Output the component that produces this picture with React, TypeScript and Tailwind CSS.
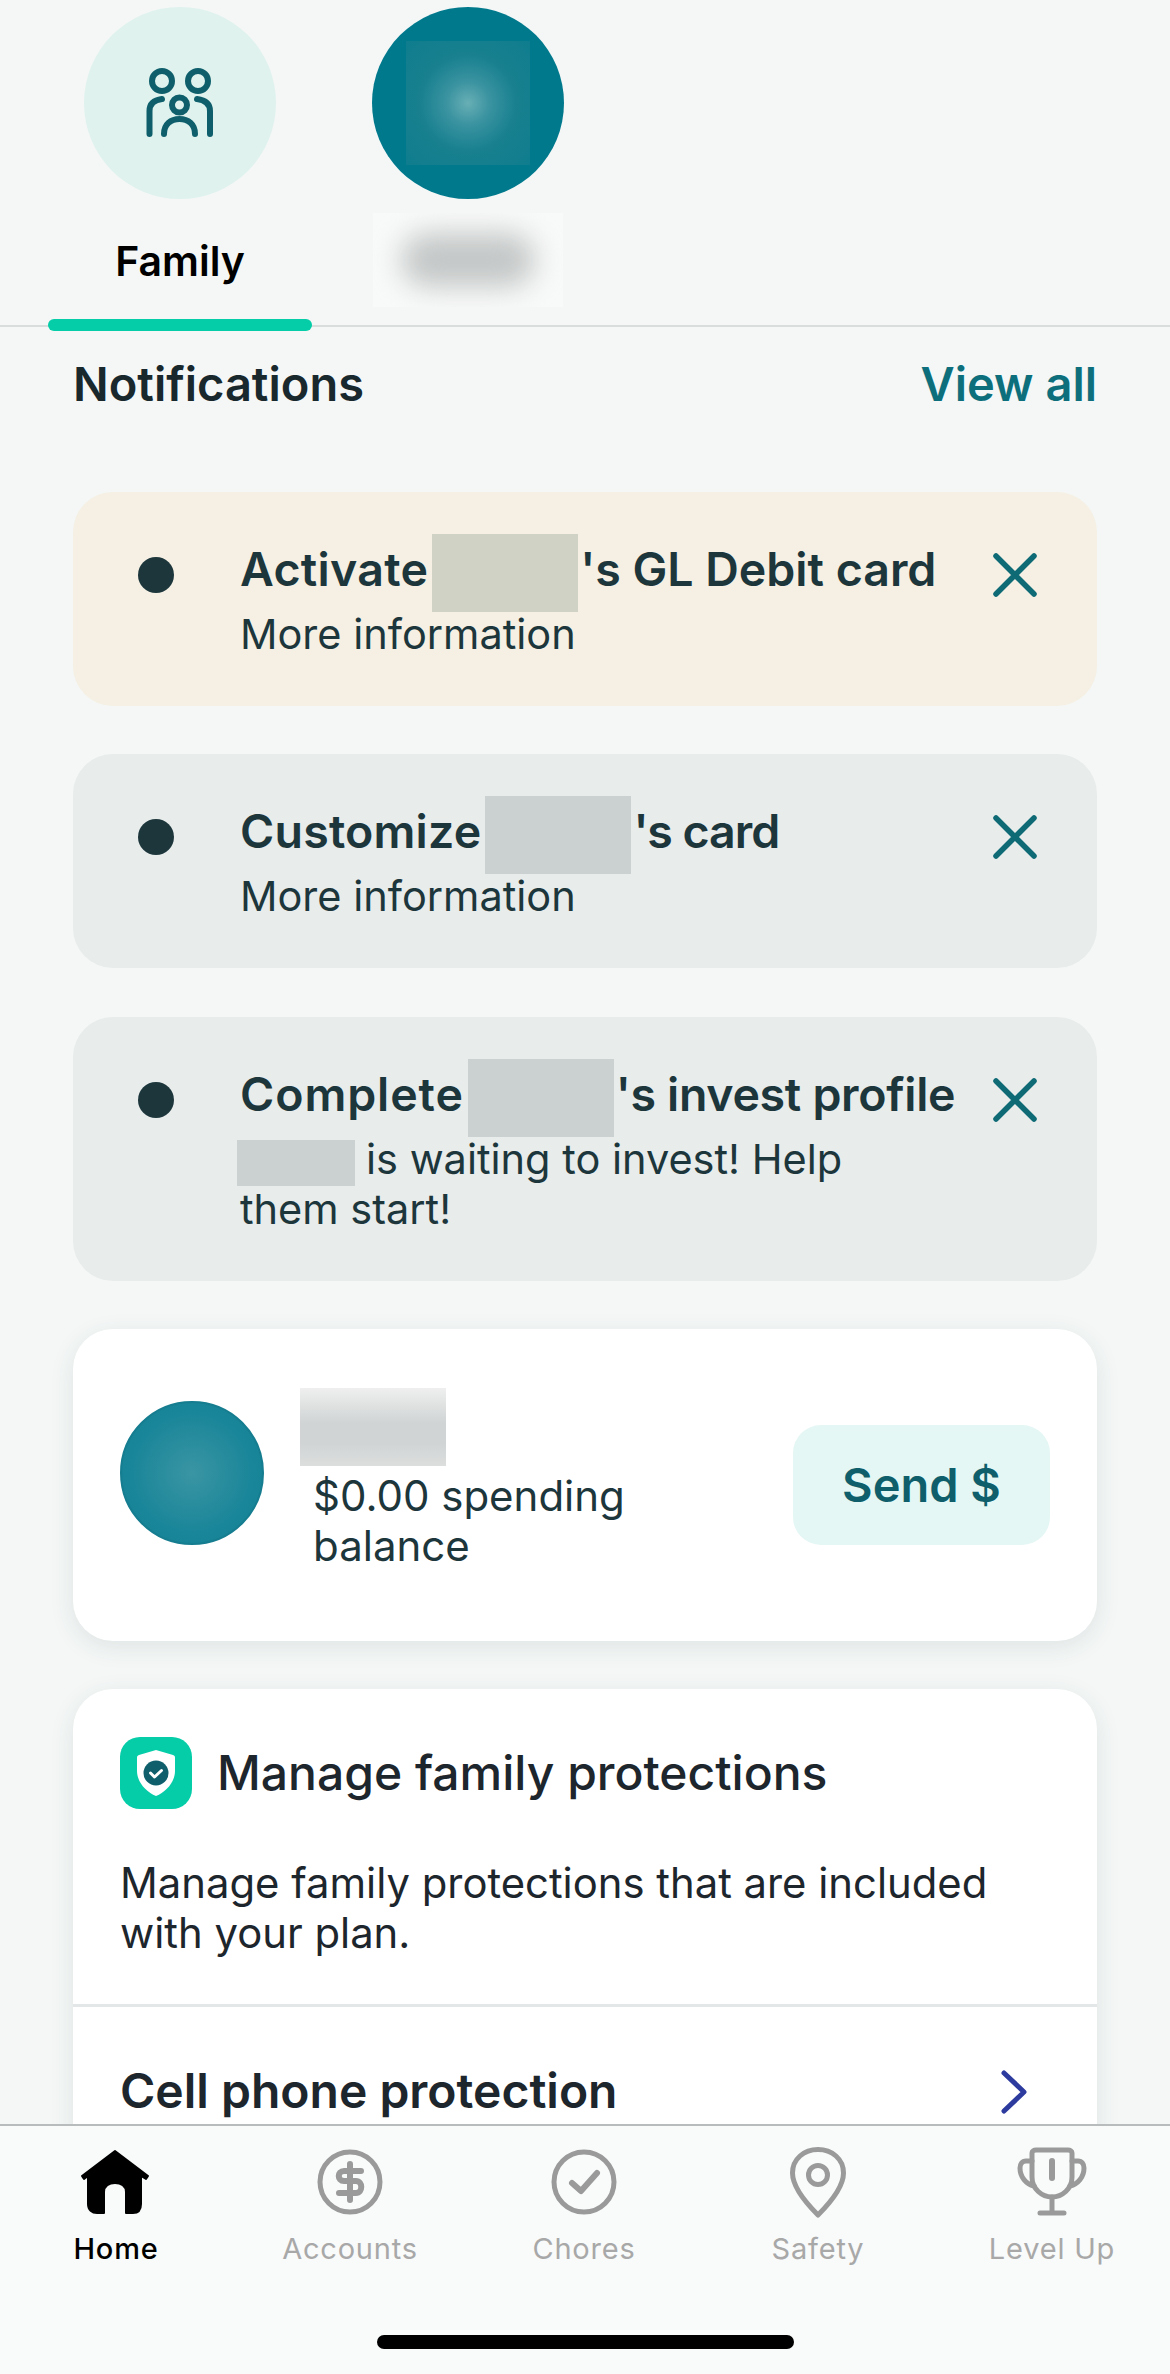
const F = "[font-family:Inter,'Liberation_Sans',sans-serif]";

function Redact({ w, bg }: { w: string; bg: string }) {
  return <span className={`inline-block h-[78px] -my-[20px] ml-[4px] mr-[2px] align-middle ${w} ${bg}`} />;
}

function Close() {
  return (
    <svg viewBox="0 0 44 44" className="w-[44px] h-[44px] shrink-0" fill="none" stroke="#0e6a75" strokeWidth="5.5" strokeLinecap="round">
      <path d="M3 3 L41 41 M41 3 L3 41" />
    </svg>
  );
}

function Card({ bg, title, sub }: { bg: string; title: React.ReactNode; sub: React.ReactNode }) {
  return (
    <div className={`flex rounded-[40px] pt-[49px] pb-[47px] pl-[65px] pr-[60px] ${bg}`}>
      <div className="w-[36px] h-[36px] mt-[16px] rounded-full bg-[#1c363c] shrink-0" />
      <div className="flex-1 ml-[66px] min-w-0">
        <div className="text-[46.5px] leading-[56px] font-semibold text-[#1c363c] whitespace-nowrap">{title}</div>
        <div className="mt-[12px] text-[41.5px] leading-[50px] text-[#1c363c] w-[640px]">{sub}</div>
      </div>
      <div className="mt-[12px]"><Close /></div>
    </div>
  );
}

export default function App() {
  return (
    <div className={`relative w-[1170px] h-[2374px] overflow-hidden bg-[#f4f7f6] ${F}`}>
      {/* tabs */}
      <div className="relative h-[327px] border-b-2 border-[#d9dedd] flex pl-[48px]">
        <div className="w-[264px] flex flex-col items-center pt-[7px] relative">
          <div className="w-[192px] h-[192px] rounded-full bg-[#dff2ee] flex items-center justify-center">
            <svg viewBox="0 0 72 72" className="w-[72px] h-[72px]" fill="none" stroke="#0e5f6b" strokeWidth="6" strokeLinecap="round">
              <circle cx="18" cy="14" r="10" />
              <circle cx="54" cy="14" r="10" />
              <circle cx="35.5" cy="38" r="7.5" />
              <path d="M18 32 C10 33 5.5 37 5.5 44 V67" />
              <path d="M53 32 C61 33 66 37 66 44 V67" />
              <path d="M20 67 C20 57 27 52 35.5 52 C44 52 51 57 51 67" />
            </svg>
          </div>
          <div className="mt-[38px] text-[41px] leading-[48px] font-semibold text-black">Family</div>
          <div className="absolute left-0 right-0 top-[319px] h-[12px] rounded-full bg-[#04cda8]" />
        </div>
        <div className="ml-[60px] w-[192px] flex flex-col items-center pt-[7px]">
          <div className="w-[192px] h-[192px] rounded-full bg-[#01798d] flex items-center justify-center">
            <div className="w-[124px] h-[124px] bg-[radial-gradient(circle,#68afb5_0%,#3a93a0_25%,#18808f_55%,#0f7d8e_100%)]" />
          </div>
          <div className="mt-[14px] w-[190px] h-[94px] bg-[#f8faf9] flex items-center justify-center overflow-hidden">
            <div className="w-[134px] h-[54px] rounded-full bg-[#c4c7c7] blur-[14px]" />
          </div>
        </div>
      </div>

      {/* body */}
      <div className="px-[73px]">
        <div className="flex justify-between items-center mt-[29px] h-[56px]">
          <span className="text-[47px] font-semibold text-[#18282d]">Notifications</span>
          <span className="text-[47px] font-semibold text-[#0e6f7c]">View all</span>
        </div>

        <div className="mt-[80px] flex flex-col gap-[48px]">
          <Card
            bg="bg-[#f5f0e3]"
            title={<><span className="tracking-[0.3px]">Activate</span><Redact w="w-[146px]" bg="bg-[#d1d2c6]" />'s GL Debit card</>}
            sub="More information"
          />
          <Card
            bg="bg-[#e8eceb] mb-[1px]"
            title={<><span className="tracking-[0.2px]">Customize</span><Redact w="w-[146px]" bg="bg-[#cbd0d0]" /><span className="tracking-[-1px]">'s card</span></>}
            sub="More information"
          />
          <Card
            bg="bg-[#e8eceb]"
            title={<><span className="tracking-[0.9px]">Complete</span><Redact w="w-[146px]" bg="bg-[#cbd0d0]" /><span className="tracking-[-0.3px]">'s invest profile</span></>}
            sub={<><span className="inline-block w-[118px] h-[46px] -my-[4px] -ml-[3px] mr-[11px] align-middle bg-[#cbd0d0]" />is waiting to invest! Help them start!</>}
          />

          {/* member card */}
          <div className="flex items-start rounded-[40px] bg-white h-[312px] pl-[47px] pr-[47px] shadow-[0_6px_24px_rgba(40,70,75,0.10)]">
            <div className="w-[144px] h-[144px] mt-[72px] rounded-full bg-[radial-gradient(circle,#3a95a3_0%,#1a8699_60%,#117f92_100%)] border-2 border-[#157d8f] shrink-0" />
            <div className="ml-[36px] flex-1 pt-[59px]">
              <div className="w-[146px] h-[78px] bg-[linear-gradient(#efefef,#d0d4d4_45%,#d0d4d4_70%,#dcdede)]" />
              <div className="ml-[13px] mt-[5px] w-[340px] text-[42px] leading-[50px] text-[#1c363c]">$0.00 spending balance</div>
            </div>
            <div className="w-[257px] h-[120px] mt-[96px] rounded-[28px] bg-[#e4f7f4] flex items-center justify-center text-[47px] font-semibold text-[#0e5f6b] shrink-0">Send $</div>
          </div>

          {/* protections */}
          <div className="rounded-t-[40px] bg-white shadow-[0_6px_24px_rgba(40,70,75,0.10)] h-[700px]">
            <div className="pt-[48px] px-[47px]">
              <div className="flex items-center">
                <div className="w-[72px] h-[72px] rounded-[20px] bg-[#04cda8] flex items-center justify-center">
                  <svg viewBox="0 0 40 48" className="w-[40px] h-[48px]">
                    <path d="M20 1 L37 6 C38.5 6.5 39 7 39 9 V22 C39 33 30 43 20 47 C10 43 1 33 1 22 V9 C1 7 1.5 6.5 3 6 Z" fill="#fff" />
                    <circle cx="20" cy="24" r="12.5" fill="#0e5f6b" />
                    <path d="M14.5 24 L18.5 28 L25.5 21.5" fill="none" stroke="#fff" strokeWidth="3" strokeLinecap="round" strokeLinejoin="round" />
                  </svg>
                </div>
                <span className="ml-[25px] text-[48px] font-medium text-[#1d262c]">Manage family protections</span>
              </div>
              <div className="mt-[49px] text-[41.8px] leading-[50px] text-[#1d262c] w-[900px]">Manage family protections that are included with your plan.</div>
            </div>
            <div className="mt-[46px] border-t-[3px] border-[#e4e7e7] pl-[47px] pr-[70px] pt-[56px] flex items-start justify-between">
              <span className="text-[48px] leading-[56px] font-semibold text-[#1d262c]">Cell phone protection</span>
              <svg viewBox="0 0 26 44" className="w-[26px] h-[44px] mt-[7px]" fill="none" stroke="#2d3a9e" strokeWidth="5" strokeLinecap="round" strokeLinejoin="round">
                <path d="M3 3 L23 22 L3 41" />
              </svg>
            </div>
          </div>
        </div>
      </div>

      {/* bottom bar */}
      <div className="absolute left-0 right-0 bottom-0 h-[250px] bg-[#f9fafa] border-t-2 border-[#b9bcbc]">
        <div className="flex -ml-[1px]">
          {[
            { label: "Home", active: true, icon: (
              <svg viewBox="0 0 72 72" className="w-[72px] h-[72px]" fill="#000">
                <path d="M35 5 L68 30 L66 33 L61 30 V58 C61 64 58 67 53 67 H46 V46 C46 40 41 37 35 37 C29 37 24 40 24 46 V67 H17 C12 67 8 64 8 58 V30 L4 33 L2 30 Z" stroke="#000" strokeLinejoin="round" strokeWidth="2"/>
              </svg>
            )},
            { label: "Accounts", icon: (
              <svg viewBox="0 0 72 72" className="w-[72px] h-[72px]" fill="none" stroke="#9a9a9a" strokeWidth="5" strokeLinecap="round">
                <circle cx="36" cy="36" r="30" />
                <path d="M47 25 H30 C23 25 23 35 30 35 H42 C49 35 49 47 42 47 H25 M36 18 V54" strokeWidth="6" />
              </svg>
            )},
            { label: "Chores", icon: (
              <svg viewBox="0 0 72 72" className="w-[72px] h-[72px]" fill="none" stroke="#9a9a9a" strokeWidth="5" strokeLinecap="round" strokeLinejoin="round">
                <circle cx="36" cy="36" r="30" />
                <path d="M24 37 L33 45 L49 27" strokeWidth="6" />
              </svg>
            )},
            { label: "Safety", icon: (
              <svg viewBox="0 0 72 72" className="w-[72px] h-[72px]" fill="none" stroke="#9a9a9a" strokeWidth="5" strokeLinecap="round" strokeLinejoin="round">
                <path d="M36 3.5 C22 3.5 10.5 13 10.5 27 C10.5 43 28 61 36 69 C44 61 61.5 43 61.5 27 C61.5 13 50 3.5 36 3.5 Z" />
                <circle cx="36" cy="29" r="9.5" />
              </svg>
            )},
            { label: "Level Up", icon: (
              <svg viewBox="0 0 72 72" className="w-[72px] h-[72px]" fill="none" stroke="#9a9a9a" strokeWidth="5" strokeLinecap="round" strokeLinejoin="round">
                <path d="M16 7 C16 5 18 4 20 4 H52 C54 4 56 5 56 7 V31 C56 43 46 51 36 51 C26 51 16 43 16 31 Z" />
                <path d="M16 15 H10 C6 15 4 18 4 22 C4 31 10 38 18 40 M56 15 H62 C66 15 68 18 68 22 C68 31 62 38 54 40" />
                <path d="M36 51 V67 M24 67 H48" />
                <path d="M36 15 V32" strokeWidth="6" />
              </svg>
            )},
          ].map((t) => (
            <div key={t.label} className="w-[234px] flex flex-col items-center pt-[20px]">
              {t.icon}
              <div className={`mt-[13px] text-[29px] leading-[36px] tracking-[0.8px] ${t.active ? "text-black font-medium" : "text-[#a8a8a8]"}`}>{t.label}</div>
            </div>
          ))}
        </div>
        <div className="absolute left-[377px] bottom-[25px] w-[417px] h-[14px] rounded-full bg-black" />
      </div>
    </div>
  );
}
